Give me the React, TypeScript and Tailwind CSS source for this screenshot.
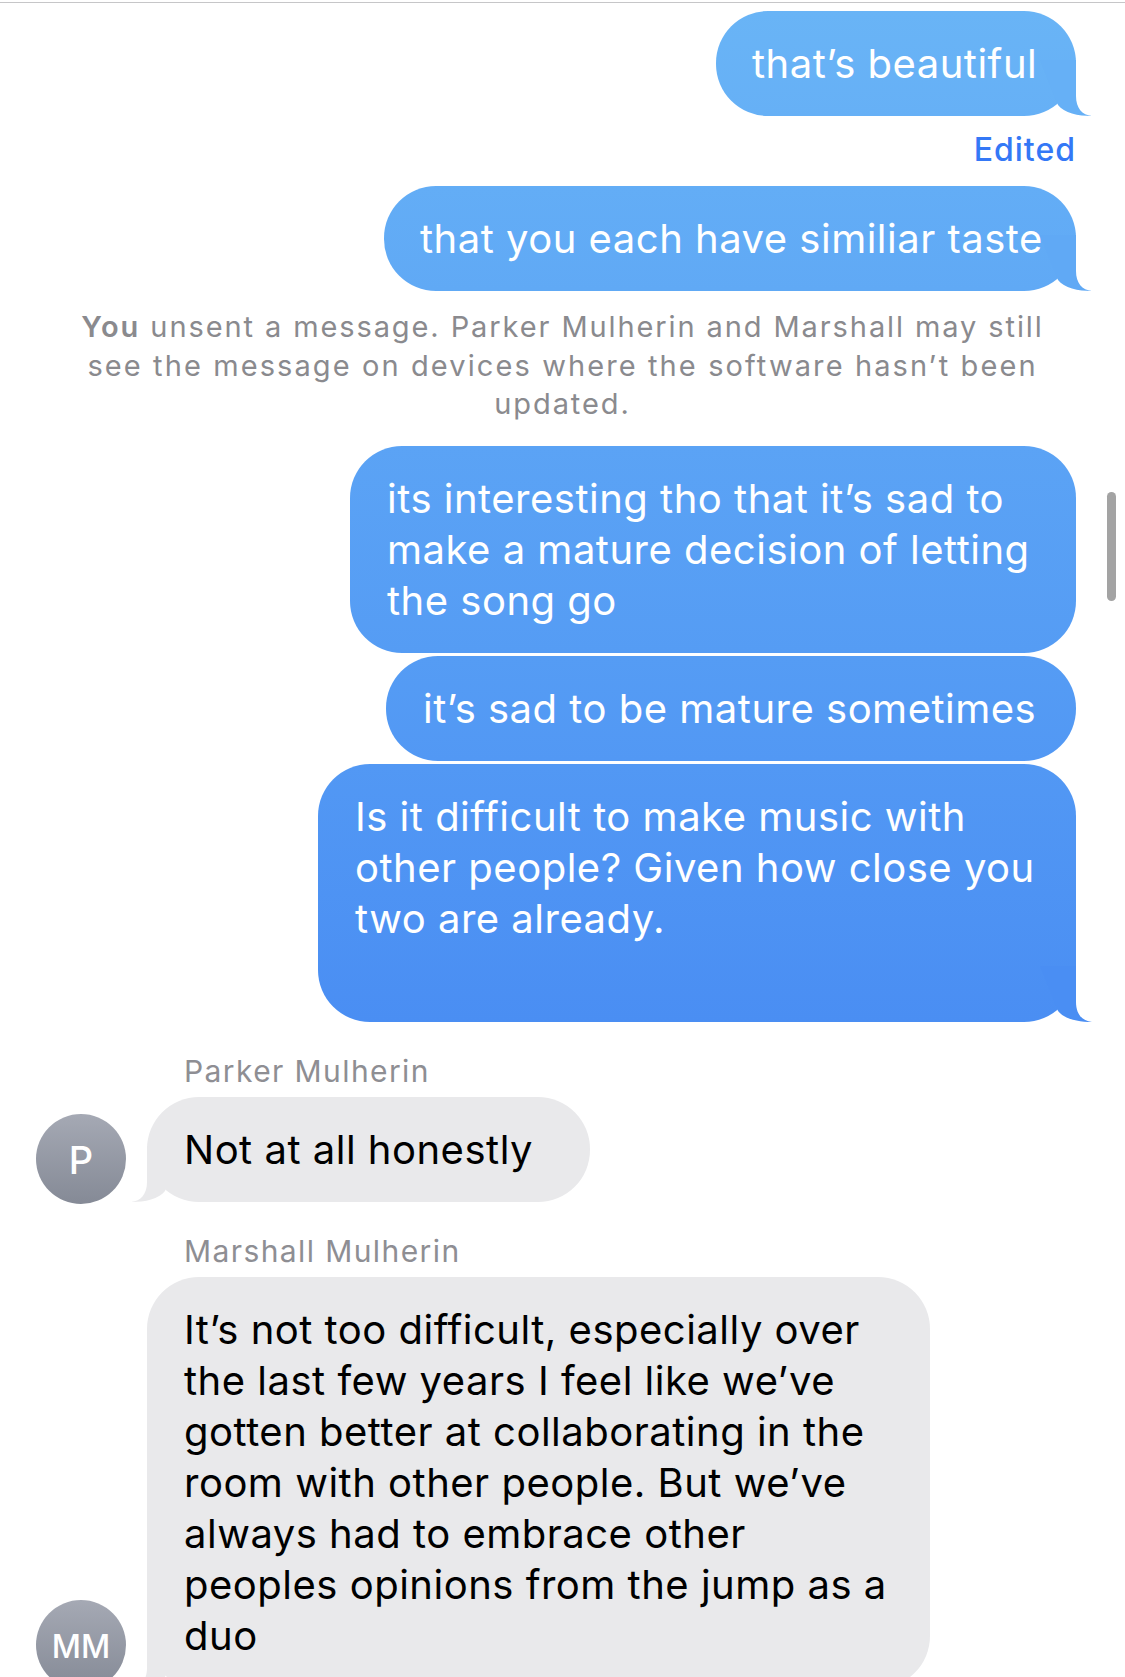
import React from "react";

function SentTail({ fill }: { fill: string }) {
  return (
    <svg
      className={"pointer-events-none absolute bottom-0 right-[-16px] h-[56px] w-[52px] " + fill}
      viewBox="0 0 52 56"
    >
      <path d="M0 0 L36 0 L36 36 C36 48 42 55 52 56 C38 56 24 53 18 45 Z" />
    </svg>
  );
}

function RecvTail() {
  return (
    <svg
      className="pointer-events-none absolute bottom-0 left-[-16px] h-[56px] w-[52px] -scale-x-100 fill-[#e9e9eb]"
      viewBox="0 0 52 56"
    >
      <path d="M0 0 L36 0 L36 36 C36 48 42 55 52 56 C38 56 24 53 18 45 Z" />
    </svg>
  );
}

function Lines({ lines }: { lines: string[] }) {
  return (
    <>
      {lines.map((l, i) => (
        <div key={i} className="h-[51px] whitespace-nowrap">
          {l}
        </div>
      ))}
    </>
  );
}

export default function App() {
  return (
    <div className="relative h-[1677px] w-[1125px] overflow-hidden bg-white font-['Inter','Liberation_Sans',sans-serif] antialiased">
      <div className="mt-[2px] h-px w-full bg-[#c6c6c8]" />

      {/* sent group 1 */}
      <div className="flex flex-col items-end pr-[49px]">
        <div className="relative mt-[8px] w-[360px] rounded-[52px] bg-linear-to-b from-[#69b4f6] to-[#66b0f6] px-[36px] py-[27px] text-[40px] leading-[51px] tracking-[0.5px] text-white">
          <Lines lines={["that’s beautiful"]} />
          <SentTail fill="fill-[#66b0f6]" />
        </div>
        <div className="mt-[15px] h-[38px] text-[32px] font-medium leading-[38px] tracking-[1px] text-[#3478f6]">
          Edited
        </div>
        <div className="relative mt-[17px] w-[692px] rounded-[52px] bg-linear-to-b from-[#63adf6] to-[#60a9f5] px-[36px] py-[27px] text-[40px] leading-[51px] tracking-[0.5px] text-white">
          <Lines lines={["that you each have similiar taste"]} />
          <SentTail fill="fill-[#60a9f5]" />
        </div>
      </div>

      {/* system notice */}
      <div className="mt-[17px] text-center text-[29px] leading-[38.5px] tracking-[1.9px] text-[#8a8a8e]">
        <div className="whitespace-nowrap">
          <span className="font-semibold">You</span> unsent a message. Parker Mulherin and Marshall may still
        </div>
        <div className="whitespace-nowrap tracking-[2.1px]">see the message on devices where the software hasn’t been</div>
        <div className="whitespace-nowrap">updated.</div>
      </div>

      {/* sent group 2 */}
      <div className="flex flex-col items-end pr-[49px]">
        <div className="relative mt-[22px] w-[726px] rounded-[52px] bg-linear-to-b from-[#5ba3f5] to-[#559cf4] px-[37px] py-[27px] text-[40px] leading-[51px] tracking-[0.5px] text-white">
          <Lines
            lines={[
              "its interesting tho that it’s sad to",
              "make a mature decision of letting",
              "the song go",
            ]}
          />
        </div>
        <div className="relative mt-[3px] w-[690px] rounded-[52px] bg-linear-to-b from-[#559cf4] to-[#5298f4] px-[37px] py-[27px] text-[40px] leading-[51px] tracking-[0.5px] text-white">
          <Lines lines={["it’s sad to be mature sometimes"]} />
        </div>
        <div className="relative mt-[3px] w-[758px] rounded-[52px] bg-linear-to-b from-[#5298f4] to-[#4a8ef3] px-[37px] py-[27px] text-[40px] leading-[51px] tracking-[0.5px] text-white">
          <Lines
            lines={[
              "Is it difficult to make music with",
              "other people? Given how close you",
              "two are already.",
              "",
            ]}
          />
          <SentTail fill="fill-[#4a8ef3]" />
        </div>
      </div>

      {/* received: Parker */}
      <div className="mt-[31px] h-[36px] pl-[184px] text-[30px] leading-[36px] tracking-[1.4px] text-[#8e8e93]">
        Parker Mulherin
      </div>
      <div className="mt-[8px] flex items-end gap-[21px] pl-[36px]">
        <div className="mb-[-2px] flex h-[90px] w-[90px] shrink-0 items-center justify-center rounded-full bg-linear-to-b from-[#a5a9b4] to-[#858a96] pt-[4px] text-[38px] font-medium text-white">
          P
        </div>
        <div className="relative w-[443px] rounded-[52px] bg-[#e9e9eb] px-[37px] py-[27px] text-[40px] leading-[51px] tracking-[0.5px] text-black">
          <Lines lines={["Not at all honestly"]} />
          <RecvTail />
        </div>
      </div>

      {/* received: Marshall */}
      <div className="mt-[31px] h-[36px] pl-[184px] text-[30px] leading-[36px] tracking-[1.4px] text-[#8e8e93]">
        Marshall Mulherin
      </div>
      <div className="mt-[8px] flex items-end gap-[21px] pl-[36px]">
        <div className="mb-[-2px] flex h-[90px] w-[90px] shrink-0 items-center justify-center rounded-full bg-linear-to-b from-[#a5a9b4] to-[#858a96] pt-[4px] text-[32px] font-medium text-white">
          MM
        </div>
        <div className="relative w-[783px] rounded-[52px] bg-[#e9e9eb] px-[37px] py-[27px] text-[40px] leading-[51px] tracking-[0.5px] text-black">
          <Lines
            lines={[
              "It’s not too difficult, especially over",
              "the last few years I feel like we’ve",
              "gotten better at collaborating in the",
              "room with other people. But we’ve",
              "always had to embrace other",
              "peoples opinions from the jump as a",
              "duo",
            ]}
          />
          <RecvTail />
        </div>
      </div>

      {/* scroll indicator */}
      <div className="absolute left-[1107px] top-[492px] h-[109px] w-[9px] rounded-full bg-[#a3a3a3]" />
    </div>
  );
}
